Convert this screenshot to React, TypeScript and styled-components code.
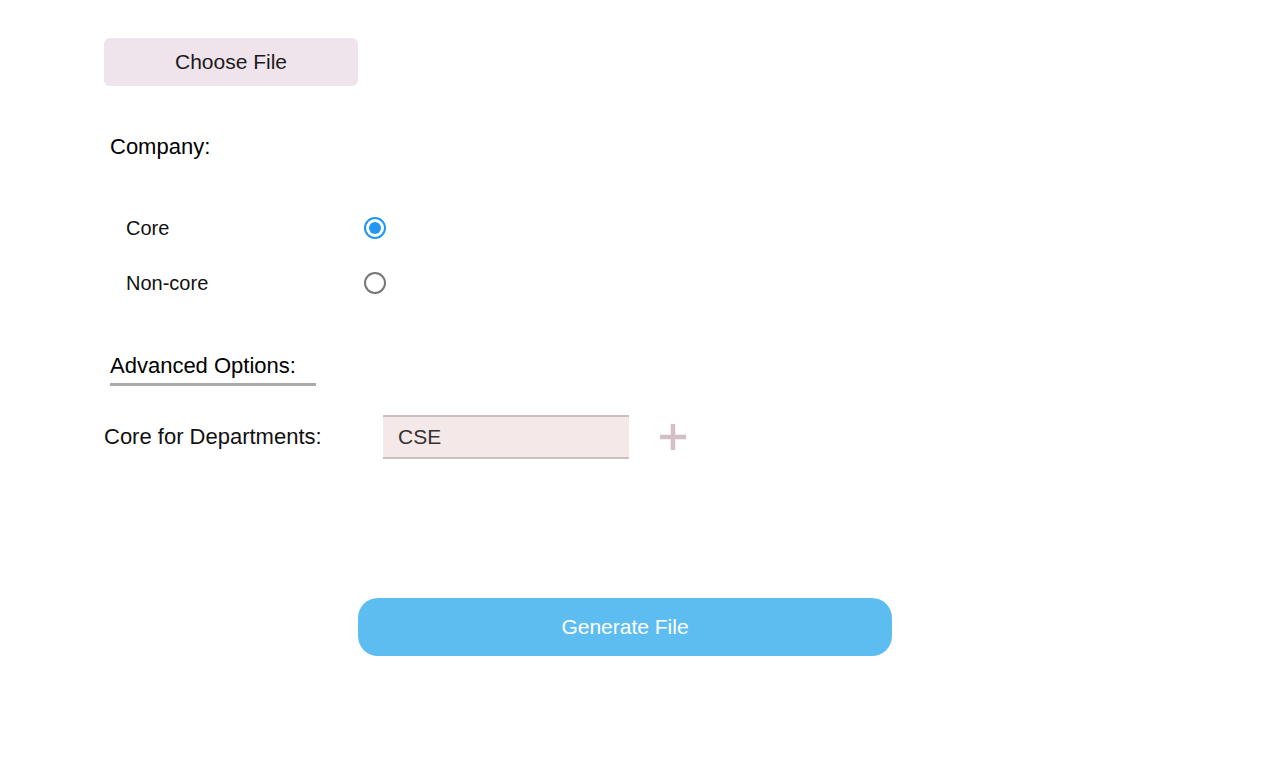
import React, { useState } from 'react';
import styled, { createGlobalStyle } from 'styled-components';

const GlobalStyle = createGlobalStyle`
  html, body {
    margin: 0;
    padding: 0;
    background: #ffffff;
    font-family: "Liberation Sans", Arial, sans-serif;
    color: #111;
  }
`;

const Page = styled.div`
  display: flex;
  flex-direction: column;
  align-items: flex-start;
  padding: 38px 0 0 104px;
  width: 1280px;
  height: 768px;
  box-sizing: border-box;
`;

const FileButton = styled.label`
  display: flex;
  align-items: center;
  justify-content: center;
  width: 254px;
  height: 48px;
  border-radius: 6px;
  background: #f0e4ec;
  font-size: 21px;
  color: #1a1a1a;
  cursor: pointer;

  input {
    display: none;
  }
`;

const SectionTitle = styled.div<{ underline?: boolean; gap: number }>`
  margin: ${p => p.gap}px 0 0 6px;
  font-size: 22px;
  line-height: 26px;
  color: #000;
  padding-bottom: ${p => (p.underline ? '4px' : '0')};
  border-bottom: ${p => (p.underline ? '3px solid #aaaaaa' : 'none')};
  width: ${p => (p.underline ? '206px' : 'auto')};
`;

const RadioList = styled.div`
  display: flex;
  flex-direction: column;
  gap: 33px;
  margin: 57px 0 0 22px;
`;

const RadioRow = styled.label`
  display: flex;
  align-items: center;
  height: 22px;
  font-size: 20px;
  cursor: pointer;
`;

const RadioLabel = styled.span`
  width: 238px;
`;

const RadioDot = styled.span<{ checked: boolean }>`
  width: 22px;
  height: 22px;
  box-sizing: border-box;
  border-radius: 50%;
  border: 2px solid ${p => (p.checked ? '#2196f3' : '#777777')};
  display: flex;
  align-items: center;
  justify-content: center;

  &::after {
    content: '';
    width: 12px;
    height: 12px;
    border-radius: 50%;
    background: ${p => (p.checked ? '#2196f3' : 'transparent')};
  }
`;

const DeptRow = styled.div`
  display: flex;
  align-items: center;
  margin-top: 29px;
`;

const DeptLabel = styled.span`
  width: 279px;
  font-size: 22px;
`;

const DeptInput = styled.input`
  width: 246px;
  height: 44px;
  box-sizing: border-box;
  border: none;
  border-top: 2px solid #cdbfbf;
  border-bottom: 2px solid #cdbfbf;
  background: #f5e8e8;
  padding: 0 15px;
  font-family: "Liberation Sans", Arial, sans-serif;
  font-size: 21px;
  color: #333;
  outline: none;
`;

const AddButton = styled.button`
  all: unset;
  margin-left: 30px;
  width: 28px;
  height: 28px;
  display: flex;
  cursor: pointer;
`;

const GenerateButton = styled.button`
  all: unset;
  margin: 139px 0 0 254px;
  width: 534px;
  height: 58px;
  border-radius: 20px;
  background: #5ebdf0;
  color: #fff;
  font-size: 21px;
  text-align: center;
  line-height: 58px;
  cursor: pointer;
`;

export default function App() {
  const [kind, setKind] = useState('core');
  const [dept, setDept] = useState('CSE');

  return (
    <>
      <GlobalStyle />
      <Page>
        <FileButton>
          Choose File
          <input type="file" />
        </FileButton>
        <SectionTitle gap={48}>Company:</SectionTitle>
        <RadioList>
          <RadioRow onClick={() => setKind('core')}>
            <RadioLabel>Core</RadioLabel>
            <RadioDot checked={kind === 'core'} />
          </RadioRow>
          <RadioRow onClick={() => setKind('noncore')}>
            <RadioLabel>Non-core</RadioLabel>
            <RadioDot checked={kind === 'noncore'} />
          </RadioRow>
        </RadioList>
        <SectionTitle gap={59} underline>Advanced Options:</SectionTitle>
        <DeptRow>
          <DeptLabel>Core for Departments:</DeptLabel>
          <DeptInput value={dept} onChange={e => setDept(e.target.value)} />
          <AddButton aria-label="add">
            <svg width="28" height="28" viewBox="0 0 28 28">
              <path d="M14 1v26M1 14h26" stroke="#d2c0c6" strokeWidth="4.5" />
            </svg>
          </AddButton>
        </DeptRow>
        <GenerateButton>Generate File</GenerateButton>
      </Page>
    </>
  );
}
